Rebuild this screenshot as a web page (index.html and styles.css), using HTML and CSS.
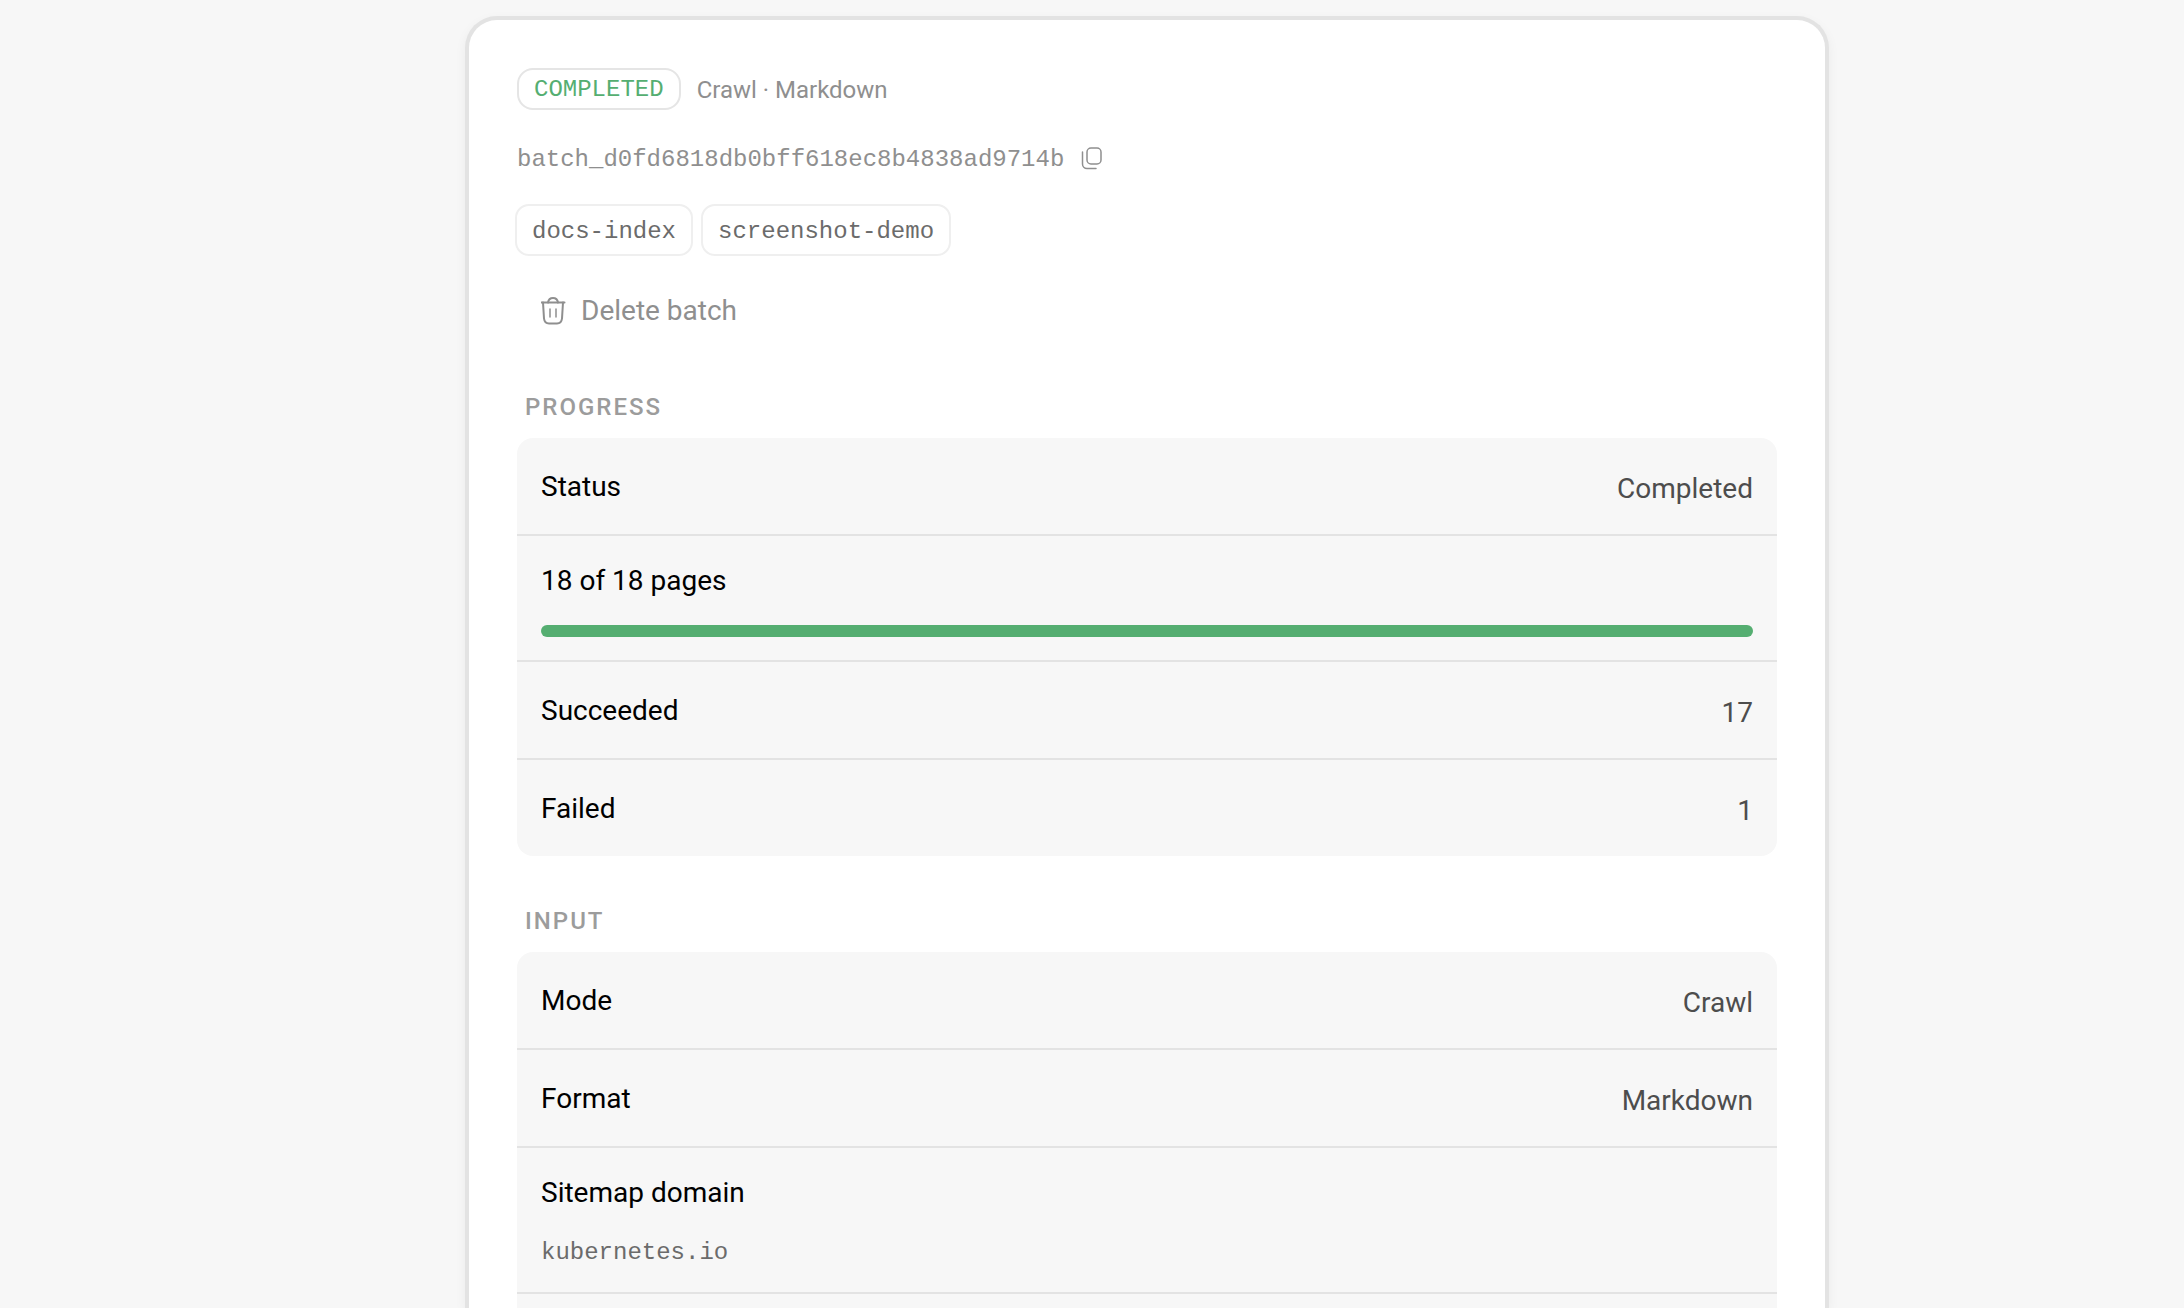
FILE: index.html
```html
<!DOCTYPE html>
<html lang="en">
<head>
  <meta charset="UTF-8" />
  <meta name="viewport" content="width=device-width, initial-scale=1" />
  <title>Batch details</title>
  <link rel="stylesheet" href="styles.css">
</head>
<body>
  <main class="card">
    <header class="batch-header">
      <div class="batch-meta">
        <span class="badge">COMPLETED</span>
        <span class="batch-type">Crawl · Markdown</span>
      </div>

      <div class="batch-id">
        <code>batch_d0fd6818db0bff618ec8b4838ad9714b</code>
        <button type="button" class="copy-button" aria-label="Copy batch ID">
          <svg width="24" height="26" viewBox="0 0 24 26" fill="none" stroke="currentColor" stroke-width="1.5" stroke-linecap="round" aria-hidden="true">
            <rect x="7" y="1" width="14" height="16" rx="4" />
            <path d="M2.5 5v12a4.5 4.5 0 0 0 4.5 4.5h9" />
          </svg>
        </button>
      </div>

      <ul class="tags">
        <li class="tag">docs-index</li>
        <li class="tag">screenshot-demo</li>
      </ul>

      <button type="button" class="delete-button">
        <svg width="28" height="28" viewBox="0 0 28 28" fill="none" stroke="currentColor" stroke-width="2" stroke-linecap="round" stroke-linejoin="round" aria-hidden="true">
          <path d="M0.5 5.500h23" />
          <path d="M7 5.500c0.500-3 2-4.500 5-4.500s4.500 1.500 5 4.500" />
          <path d="M2 5.500l1 16c0.400 3.500 2 5 5 5h8c3 0 4.600-1.500 5-5L22 5.500" />
          <path d="M9 12v8M15 12v8" stroke-width="1.500" />
        </svg>
        Delete batch
      </button>
    </header>

    <section class="section">
      <h2>PROGRESS</h2>
      <div class="panel">
        <div class="row">
          <span class="label">Status</span>
          <span class="value">Completed</span>
        </div>
        <div class="row stacked">
          <label class="label" for="pages">18 of 18 pages</label>
          <progress id="pages" value="18" max="18"></progress>
        </div>
        <div class="row">
          <span class="label">Succeeded</span>
          <span class="value">17</span>
        </div>
        <div class="row">
          <span class="label">Failed</span>
          <span class="value">1</span>
        </div>
      </div>
    </section>

    <section class="section section-last">
      <h2>INPUT</h2>
      <div class="panel">
        <div class="row">
          <span class="label">Mode</span>
          <span class="value">Crawl</span>
        </div>
        <div class="row">
          <span class="label">Format</span>
          <span class="value">Markdown</span>
        </div>
        <div class="row stacked">
          <span class="label">Sitemap domain</span>
          <code class="domain">kubernetes.io</code>
        </div>
      </div>
    </section>
  </main>
</body>
</html>
```
FILE: styles.css
```css
* {
  box-sizing: border-box;
}

body {
  margin: 0;
  padding-top: 16px;
  min-height: 100vh;
  display: grid;
  grid-template-columns: 465fr 1364fr 355fr;
  font-family: Roboto, sans-serif;
  font-size: 28px;
  line-height: 40px;
  color: #000;
  background: #f7f7f7;
}

code, .badge, .tag {
  font-family: "Liberation Mono", monospace;
  font-size: 24px;
}

button {
  padding: 0;
  border: none;
  background: none;
  font: inherit;
  color: #8f8f8f;
  cursor: pointer;
}

.card {
  grid-column: 2;
  display: flex;
  flex-direction: column;
  padding: 48px 48px 0;
  border: 4px solid #e3e3e3;
  border-bottom: none;
  border-radius: 32px 32px 0 0;
  background: #fff;
  box-shadow: 0 4px 12px rgba(0,0,0,0.05);
}

.batch-header {
  display: flex;
  flex-direction: column;
  align-items: flex-start;
}

.batch-meta {
  display: flex;
  gap: 16px;
}

.badge {
  padding: 2px 15px 0;
  border: 2px solid #e5e5e5;
  border-radius: 16px;
  line-height: 36px;
  color: #55ae71;
}

.batch-type {
  font-size: 24px;
  line-height: 44px;
  height: 42px;
  color: #8f8f8f;
}

.batch-id {
  display: flex;
  align-items: center;
  gap: 16px;
  margin-top: 32px;
  line-height: 36px;
  color: #8f8f8f;
}

.copy-button {
  display: flex;
}

.tags {
  display: flex;
  flex-wrap: wrap;
  gap: 8px;
  margin: 26px 0 0 -2px;
  padding: 0;
  list-style: none;
}

.tag {
  padding: 4px 15px 0;
  border: 2px solid #efefef;
  border-radius: 14px;
  line-height: 44px;
  color: #6b6b6b;
}

.delete-button {
  display: flex;
  align-items: center;
  gap: 12px;
  height: 64px;
  margin-top: 22px;
  padding: 2px 24px 0;
}

.section {
  margin-top: 48px;
}

.section h2 {
  margin: 0 8px 14px;
  font-size: 24px;
  font-weight: 500;
  line-height: 34px;
  letter-spacing: 2px;
  color: #9c9c9c;
}

.panel {
  border-radius: 16px;
  background: #f7f7f7;
}

.row {
  display: flex;
  justify-content: space-between;
  padding: 29px 24px 23px;
}

.row + .row {
  border-top: 2px solid #e3e3e3;
}

.row.stacked {
  flex-direction: column;
  gap: 24px;
  padding-top: 25px;
}

.value {
  line-height: 44px;
  color: #4d4d4d;
}

.domain {
  line-height: 32px;
  color: #6b6b6b;
}

progress {
  appearance: none;
  display: block;
  width: 100%;
  height: 12px;
  border: none;
  border-radius: 6px;
  overflow: hidden;
  background: #e3e3e3;
}

progress::-webkit-progress-bar {
  background: #e3e3e3;
}

progress::-webkit-progress-value {
  background: #55ae71;
}

/* the last panel runs on to the bottom of the window */
.section-last {
  flex: 1;
  display: flex;
  flex-direction: column;
}

.section-last .panel {
  flex: 1;
  border-radius: 16px 16px 0 0;
}

.section-last .stacked {
  border-bottom: 2px solid #e3e3e3;
}
```
